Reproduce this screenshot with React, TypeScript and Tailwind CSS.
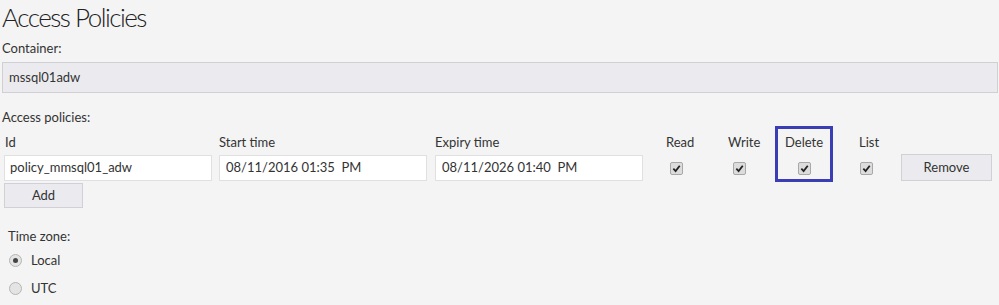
import React from "react";

const font = { fontFamily: 'Lato, "Open Sans", sans-serif' };

function Check() {
  return (
    <span className="flex w-[13px] h-[13px] items-center justify-center rounded-[2px] border border-[#a8a8a8] bg-[#dcdcdc]">
      <svg width="9" height="9" viewBox="0 0 10 10">
        <path d="M1.5 5.2 L4 7.8 L8.6 2" fill="none" stroke="#222" strokeWidth="2" />
      </svg>
    </span>
  );
}

function Radio({ on }: { on?: boolean }) {
  return (
    <span className="flex w-[13px] h-[13px] items-center justify-center rounded-full border border-[#b5b5b5] bg-[#e4e4e4]">
      {on && <span className="w-[5px] h-[5px] rounded-full bg-[#444]" />}
    </span>
  );
}

export default function App() {
  return (
    <div
      className="w-[999px] h-[305px] overflow-hidden bg-[#f4f4f4] text-[#333] pl-[2px]"
      style={font}
    >
      <h1 className="text-[26px] font-light leading-[34px] tracking-[-1.5px] text-[#222]">Access Policies</h1>
      <div className="text-[13px] leading-[18px] mt-[5px]">Container:</div>
      <div className="mt-[5px] mr-[1px] h-[31px] border border-[#cfcfd4] bg-[#ebebef] flex items-center pl-[6px] text-[13px]">
        mssql01adw
      </div>
      <div className="text-[13px] leading-[18px] mt-[15px]">Access policies:</div>
      <div className="flex mt-[7px] ml-[2px]">
        <div className="w-[215px]">
          <div className="text-[13px] leading-[18px] pl-[1px]">Id</div>
          <div className="mt-[4px] w-[208px] h-[26px] border border-[#e0e0e0] bg-white flex items-center pl-[5px] text-[13px]">
            policy_mmsql01_adw
          </div>
          <button className="mt-[2px] w-[79px] h-[25px] border border-[#d0d0d6] bg-[#ebebef] text-[13px]">Add</button>
        </div>
        <div className="w-[216px]">
          <div className="text-[13px] leading-[18px]">Start time</div>
          <div className="mt-[4px] w-[208px] h-[26px] border border-[#e0e0e0] bg-white flex items-center pl-[6px] text-[13px]">
            08/11/2016 01:35&nbsp; PM
          </div>
        </div>
        <div className="w-[224px]">
          <div className="text-[13px] leading-[18px]">Expiry time</div>
          <div className="mt-[4px] w-[208px] h-[26px] border border-[#e0e0e0] bg-white flex items-center pl-[6px] text-[13px]">
            08/11/2026 01:40&nbsp; PM
          </div>
        </div>
        <div className="w-[62px] flex flex-col items-start pl-[7px]">
          <div className="text-[13px] leading-[18px]">Read</div>
          <div className="mt-[11px] ml-[4px]"><Check /></div>
        </div>
        <div className="w-[54px] flex flex-col items-start pl-[7px]">
          <div className="text-[13px] leading-[18px]">Write</div>
          <div className="mt-[11px] ml-[5px]"><Check /></div>
        </div>
        <div className="w-[58px] -mt-[7px] h-[56px] border-[3px] border-[#3a3db3] flex flex-col items-center">
          <div className="text-[13px] leading-[18px] mt-[4px]">Delete</div>
          <div className="mt-[11px]"><Check /></div>
        </div>
        <div className="w-[68px] flex flex-col items-start pl-[26px]">
          <div className="text-[13px] leading-[18px]">List</div>
          <div className="mt-[11px] ml-[1px]"><Check /></div>
        </div>
        <div className="pt-[21px]">
          <button className="w-[91px] h-[27px] border border-[#d0d0d6] bg-[#ebebef] text-[13px]">Remove</button>
        </div>
      </div>
      <div className="text-[13px] leading-[18px] mt-[19px] ml-[6px]">Time zone:</div>
      <div className="flex items-center gap-[9px] ml-[7px] mt-[6px] text-[13px] leading-[18px]">
        <Radio on /> <span>Local</span>
      </div>
      <div className="flex items-center gap-[9px] ml-[7px] mt-[10px] text-[13px] leading-[18px]">
        <Radio /> <span>UTC</span>
      </div>
    </div>
  );
}
